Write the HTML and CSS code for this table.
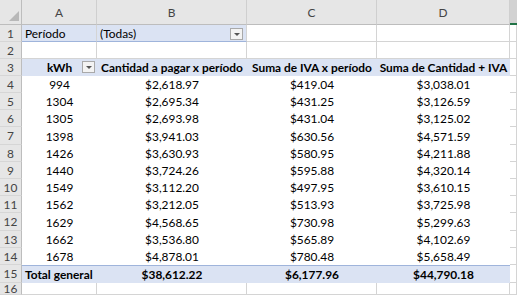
FILE: index.html
```html
<!DOCTYPE html>
<html lang="es">
<head>
<meta charset="utf-8">
<link rel="stylesheet" href="styles.css">
</head>
<body>
<div class="sheet">
  <div class="corner"><svg width="22" height="25" viewBox="0 0 22 25"><polygon points="9,21 19,21 19,11" fill="#b8b8b8"/></svg></div>
  <div class="colh">A</div>
  <div class="colh">B</div>
  <div class="colh">C</div>
  <div class="colh">D</div>
  <div class="colh sel"></div>

  <div class="rowh">1</div>
  <div class="c filt left">Período</div>
  <div class="c filt left btnwrap">(Todas)<span class="dd"></span></div>
  <div class="c"></div>
  <div class="c"></div>
  <div class="c"></div>

  <div class="rowh">2</div>
  <div class="c"></div>
  <div class="c"></div>
  <div class="c"></div>
  <div class="c"></div>
  <div class="c"></div>

  <div class="rowh">3</div>
  <div class="p head btnwrap">kWh<span class="dd fb"></span></div>
  <div class="p head">Cantidad a pagar x período</div>
  <div class="p head">Suma de IVA x período</div>
  <div class="p head">Suma de Cantidad + IVA</div>
  <div class="c"></div>

  <div class="rowh">4</div><div class="p">994</div><div class="p">$2,618.97</div><div class="p">$419.04</div><div class="p">$3,038.01</div><div class="c"></div>
  <div class="rowh">5</div><div class="p">1304</div><div class="p">$2,695.34</div><div class="p">$431.25</div><div class="p">$3,126.59</div><div class="c"></div>
  <div class="rowh">6</div><div class="p">1305</div><div class="p">$2,693.98</div><div class="p">$431.04</div><div class="p">$3,125.02</div><div class="c"></div>
  <div class="rowh">7</div><div class="p">1398</div><div class="p">$3,941.03</div><div class="p">$630.56</div><div class="p">$4,571.59</div><div class="c"></div>
  <div class="rowh">8</div><div class="p">1426</div><div class="p">$3,630.93</div><div class="p">$580.95</div><div class="p">$4,211.88</div><div class="c"></div>
  <div class="rowh">9</div><div class="p">1440</div><div class="p">$3,724.26</div><div class="p">$595.88</div><div class="p">$4,320.14</div><div class="c"></div>
  <div class="rowh">10</div><div class="p">1549</div><div class="p">$3,112.20</div><div class="p">$497.95</div><div class="p">$3,610.15</div><div class="c"></div>
  <div class="rowh">11</div><div class="p">1562</div><div class="p">$3,212.05</div><div class="p">$513.93</div><div class="p">$3,725.98</div><div class="c"></div>
  <div class="rowh">12</div><div class="p">1629</div><div class="p">$4,568.65</div><div class="p">$730.98</div><div class="p">$5,299.63</div><div class="c"></div>
  <div class="rowh">13</div><div class="p">1662</div><div class="p">$3,536.80</div><div class="p">$565.89</div><div class="p">$4,102.69</div><div class="c"></div>
  <div class="rowh">14</div><div class="p">1678</div><div class="p">$4,878.01</div><div class="p">$780.48</div><div class="p">$5,658.49</div><div class="c"></div>

  <div class="rowh">15</div>
  <div class="p total left">Total general</div>
  <div class="p total">$38,612.22</div>
  <div class="p total">$6,177.96</div>
  <div class="p total">$44,790.18</div>
  <div class="c"></div>

  <div class="rowh">16</div>
  <div class="c"></div>
  <div class="c"></div>
  <div class="c"></div>
  <div class="c"></div>
  <div class="c"></div>
</div>
</body>
</html>
```

FILE: styles.css
```css
* { box-sizing: border-box; }
html, body { margin: 0; padding: 0; background: #ffffff; }
body {
  font-family: Lato, "Open Sans", sans-serif;
  font-size: 11.9px;
  color: #000;
  width: 517px;
  height: 295px;
  overflow: hidden;
}
.sheet {
  display: grid;
  grid-template-columns: 22px 75px 150px 130px 133px 7px;
  grid-template-rows: 25px 17px 17px 17px 17px 17px 17px 18px 17px 17px 17px 17px 18px 17px 17px 18px 12px;
  width: 517px;
  height: 295px;
  overflow: hidden;
}
.corner {
  background: #e6e6e6;
  border-right: 1px solid #bdbdbd;
  border-bottom: 1px solid #bdbdbd;
}
.corner svg { display: block; }
.colh {
  background: #e6e6e6;
  color: #444;
  border-right: 1px solid #cfcfcf;
  border-bottom: 1px solid #bdbdbd;
  display: flex;
  align-items: flex-end;
  justify-content: center;
  padding-bottom: 4px;
}
.colh.sel {
  background: #d2d2d2;
  border-right: none;
  border-bottom: 2px solid #217346;
}
.rowh {
  background: #e6e6e6;
  color: #444;
  border-right: 1px solid #bdbdbd;
  border-bottom: 1px solid #d6d6d6;
  display: flex;
  align-items: center;
  justify-content: center;
}
.c {
  border-right: 1px solid #d4d4d4;
  border-bottom: 1px solid #d4d4d4;
  display: flex;
  align-items: center;
  padding: 0 3px;
  white-space: nowrap;
}
.p {
  display: flex;
  align-items: center;
  justify-content: center;
  white-space: nowrap;
  background: #fff;
  padding: 0 2px;
}
.left { justify-content: flex-start; padding-left: 3px; }
.filt {
  background: #dbe3f3;
  border-bottom: 1px solid #9fb4db;
}
.head {
  background: #dbe3f3;
  font-weight: bold;
}
.total {
  background: #dbe3f3;
  border-top: 1px solid #9fb4db;
  font-weight: bold;
}
.btnwrap { position: relative; }
.dd {
  position: absolute;
  right: 3px;
  top: 3px;
  width: 13px;
  height: 12px;
  background: #f3f3f3;
  border: 1px solid #a9a9a9;
}
.dd::after {
  content: "";
  position: absolute;
  left: 3px;
  top: 4px;
  border-left: 3px solid transparent;
  border-right: 3px solid transparent;
  border-top: 3px solid #555;
}
.dd.fb { right: 2px; top: 2px; }
```
